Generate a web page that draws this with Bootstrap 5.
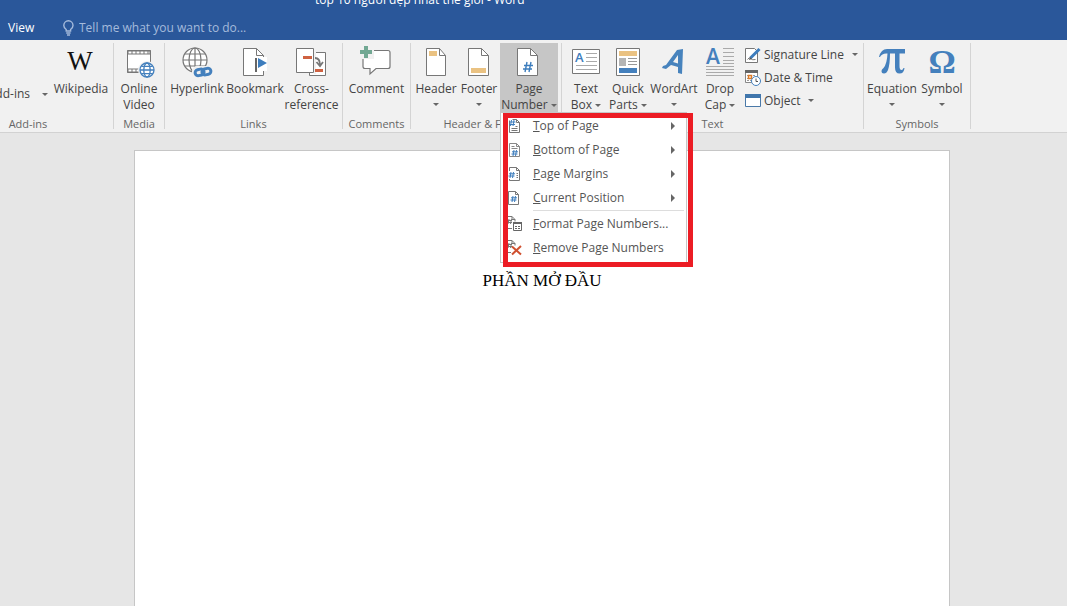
<!DOCTYPE html>
<html lang="en">
<head>
<meta charset="utf-8">
<meta name="viewport" content="width=device-width, initial-scale=1">
<title>Word</title>
<link href="https://cdn.jsdelivr.net/npm/bootstrap@5.3.0/dist/css/bootstrap.min.css" rel="stylesheet">
<style>
  body { font: 12px/16px "Open Sans", "Noto Sans", sans-serif; color: #444; background: #e6e6e6; }
  button { font: inherit; color: inherit; background: none; border: 0; padding: 0; }
  svg { display: block; flex: none; overflow: visible; }
  .title-bar { background: #2a579a; color: #fff; height: 40px; }
  .doc-title { height: 16px; margin-top: -8px; padding-left: 315px; }
  .tab-row { height: 24px; margin-top: 8px; padding-left: 8px; }
  .tab-row a { color: #fff; width: 54px; }
  .tell-me { background: none; border: 0; color: #fff; width: 220px; padding: 0; outline: 0; }
  .tell-me::placeholder { color: #a5bbdc; opacity: 1; }
  .ribbon { background: #f1f1f1; border-bottom: 1px solid #d2d2d2; height: 93px; padding-top: 3px; }
  .group { padding: 0 3px; border-right: 1px solid #d4d4d4; height: 86px; flex: none; }
  .group-addins { width: 171px; margin-left: -57px; }
  .group-name { color: #666; font-size: 11px; line-height: 14px; text-align: center; white-space: nowrap; }
  .tools { height: 74px; }
  .tool { display: flex; flex-direction: column; align-items: center; height: 69px; padding-top: 4px; white-space: nowrap; }
  .tool svg.pic { margin-bottom: 4px; }
  .tool.on { background: #c6c6c6; }
  .w-xs { width: 42px; } .w-s { width: 44px; } .w-m { width: 50px; } .w-l { width: 58px; } .w-c { width: 61px; } .w-r { width: 55px; }
  .caret { display: inline-block; border: 3px solid transparent; border-top-color: #666; border-bottom: 0; vertical-align: 2px; }
  .caret-row { line-height: 14px; }
  .side-tools { width: 119px; padding-left: 4px; }
  .side-tools button { height: 23px; white-space: nowrap; }
  .menu { position: absolute; top: 69px; left: 0; width: 187px; z-index: 5; background: #fff; border: 1px solid #c6c6c6; padding: 1px 0 2px; }
  .menu button { height: 24px; width: 100%; padding-left: 7px; color: #555; white-space: nowrap; text-align: left; }
  .menu svg { margin-right: 9px; }
  .menu .arrow { border: 4px solid transparent; border-left-color: #666; border-right: 0; margin: 0 11px 0 auto; }
  .menu hr { margin: 0 2px 1px 32px; opacity: 1; color: #ddd; }
  .highlight { position: absolute; inset: 0 -7px -5px 2px; border: 5px solid #ec1c24; pointer-events: none; }
  .sheet { background: #fff; border: 1px solid #c6c6c6; border-bottom: 0; margin: 17px 117px 0 134px; min-height: calc(100vh - 150px); padding-top: 120px; }
  .sheet h1 { font: 17px/20px "Liberation Serif", serif; color: #000; text-align: center; margin: 0; }
  .glyph-serif { font-family: "Liberation Serif", serif; }
</style>
</head>
<body class="overflow-hidden">
<header class="title-bar d-flex flex-column">
  <div class="doc-title">top 10 người đẹp nhất thế giới - Word</div>
  <nav class="tab-row d-flex align-items-center">
    <a href="#" class="text-decoration-none">View</a>
    <label for="tell" class="me-1" aria-label="Tell me"><svg width="13" height="16" viewBox="0 0 13 16" fill="none" stroke="#a5bbdc" stroke-width="1.4"><path d="M4.2 11V9.500C2.700 8.300 1.800 7 1.800 5.400a4.600 4.600 0 0 1 9.200 0c0 1.600-.9 2.900-2.400 4.100V11zM4.200 13h4.400M5 15h3"/></svg></label>
    <input id="tell" class="tell-me" type="text" placeholder="Tell me what you want to do...">
  </nav>
</header>

<div class="ribbon d-flex">
  <section class="group group-addins">
    <div class="tools d-flex justify-content-end">
      <button class="d-flex align-items-center pt-4 mt-1"><span class="me-2">My Add-ins</span><span class="caret ms-1 me-1"></span></button>
      <button class="tool w-l"><svg class="pic" width="30" height="30" viewBox="0 0 30 30"><text x="14" y="23" font-size="27" text-anchor="middle" class="glyph-serif" fill="#111">W</text></svg>Wikipedia</button>
    </div>
    <div class="group-name">Add-ins</div>
  </section>

  <section class="group">
    <div class="tools d-flex">
      <button class="tool w-s"><svg class="pic" width="30" height="30" viewBox="0 0 30 30"><path d="M3.500 3.500h23v22h-23z" fill="#fff" stroke="#777"/><path d="M3 5.500h24M3 23.500h12" stroke="#777" stroke-width="4"/><path d="M4.500 5.500h21M4.500 23.500h10" stroke="#fff" stroke-width="2" stroke-dasharray="3 1"/><circle cx="23" cy="23" r="9" fill="#f1f1f1"/><g fill="none" stroke="#4480bd" stroke-width="1.300"><circle cx="23" cy="23" r="7" fill="#fff"/><ellipse cx="23" cy="23" rx="3.200" ry="7"/><path d="M16 23h14M17.500 19.300h11M17.500 26.700h11"/></g></svg>Online<br>Video</button>
    </div>
    <div class="group-name">Media</div>
  </section>

  <section class="group">
    <div class="tools d-flex">
      <button class="tool w-l"><svg class="pic" width="32" height="30" viewBox="0 0 32 30" fill="none"><g stroke="#777" stroke-width="1.200"><circle cx="14" cy="13" r="12" fill="#fff"/><ellipse cx="14" cy="13" rx="6" ry="12"/><path d="M14 1v24M2 13h24M4 7h20M4 19h20"/></g><rect x="11" y="19" width="21" height="12" rx="5" fill="#f1f1f1"/><g stroke="#4480bd" stroke-width="3"><rect x="14" y="22.500" width="9" height="6" rx="3" transform="rotate(-12 18 25)"/><rect x="21" y="21.500" width="9" height="6" rx="3" transform="rotate(-12 26 25)"/></g></svg>Hyperlink</button>
      <button class="tool w-l"><svg class="pic" width="30" height="30" viewBox="0 0 30 30"><path d="M3.500 1.500h13l7 7v20h-20z" fill="#fff" stroke="#777"/><path d="M16.500 1.500v7h7" fill="none" stroke="#777"/><path d="M14 10h13v14H14z" fill="#fff"/><path d="M16 11v14" stroke="#666" stroke-width="2"/><path d="M18 11l9 5-9 5z" fill="#3d7dbd"/></svg>Bookmark</button>
      <button class="tool w-r"><svg class="pic" width="30" height="30" viewBox="0 0 30 30"><path d="M12.500 5.500h16v23h-16z" fill="#fff" stroke="#777"/><path d="M-.500 1.500h17v24h-17z" fill="#fff" stroke="#777"/><path d="M18 4v23" stroke="#f1f1f1" stroke-width="2"/><path d="M6 9h9v3H6zM18 22h8v3h-8z" fill="#cf6242"/><path d="M18 11c4 0 5 3 5 7M19.500 15l3.500 4 3-4" fill="none" stroke="#777" stroke-width="1.800"/></svg>Cross-<br>reference</button>
    </div>
    <div class="group-name">Links</div>
  </section>

  <section class="group">
    <div class="tools d-flex">
      <button class="tool w-c"><svg class="pic" width="32" height="30" viewBox="0 0 32 30"><path d="M4 3.500h23q2 0 2 2v14q0 2-2 2H15l-6 5.500V21.500H4q-2 0-2-2V4z" fill="#fff" stroke="#777" stroke-width="1.200"/><path d="M-1-1h14v13H-1z" fill="#f1f1f1"/><path d="M-1 5h12M5-1v12" stroke="#72a893" stroke-width="4"/></svg>Comment</button>
    </div>
    <div class="group-name">Comments</div>
  </section>

  <section class="group">
    <div class="tools d-flex">
      <button class="tool w-s"><svg class="pic" width="22" height="30" viewBox="0 0 22 30"><path d="M1.500 1.500h13l6 7v20h-19z" fill="#fff" stroke="#777"/><path d="M14.500 1.500v7h6" fill="none" stroke="#777"/><path d="M4 4h8v5H4z" fill="#eac282"/></svg>Header<span class="caret-row"><i class="caret"></i></span></button>
      <button class="tool w-xs"><svg class="pic" width="22" height="30" viewBox="0 0 22 30"><path d="M.500 1.500h13l7 7v20H.500z" fill="#fff" stroke="#777"/><path d="M13.500 1.500v7h7" fill="none" stroke="#777"/><path d="M3 21h15v5H3z" fill="#eac282"/></svg>Footer<span class="caret-row"><i class="caret"></i></span></button>
      <div class="position-relative">
        <button class="tool w-l on"><svg class="pic" width="22" height="30" viewBox="0 0 22 30"><path d="M-.500 1.500h13l7 7v20h-20z" fill="#fff" stroke="#777"/><path d="M12.500 1.500v7h7" fill="none" stroke="#777"/><path d="M9 15l-2 10M13 15l-2 10M6 18.500h9M5 22h9" stroke="#3d7dbd" stroke-width="1.400"/></svg>Page<span>Number <i class="caret"></i></span></button>
        <div class="menu">
          <button class="d-flex align-items-center"><svg width="16" height="16" viewBox="0 0 16 16" fill="none"><path d="M1.500 2.500v12h10v-10l-3-3h-4M8.500 1.500v3h3M3.500 10.500h6M3.500 12.500h6M7.500 8.500h2" stroke="#777"/><path d="M3.500 2l-1 6M6 2l-1 6M1.500 4h6M1 6.500h6" stroke="#3d7dbd"/></svg><span><u>T</u>op of Page</span><i class="arrow"></i></button>
          <button class="d-flex align-items-center"><svg width="16" height="16" viewBox="0 0 16 16" fill="none"><path d="M1.500 1.500h7l3 3v10h-10zM8.500 1.500v3h3M3.500 4.500h3M3.500 6.500h6" stroke="#888"/><path d="M6 8l-1 6M8.500 8l-1 6M4 9.800h6M3.500 12h6" stroke="#3d7dbd"/></svg><span><u>B</u>ottom of Page</span><i class="arrow"></i></button>
          <button class="d-flex align-items-center"><svg width="16" height="16" viewBox="0 0 16 16" fill="none"><path d="M1.500 5V1.500h7l3 3v10h-10V13M8.500 1.500v3h3M8.500 7.500h1.500M8.500 9.500h1.500M8.500 11.500h1.500" stroke="#777"/><path d="M3 6l-1 6M5.500 6l-1 6M1 7.800h6M.500 10h6" stroke="#3d7dbd"/></svg><span><u>P</u>age Margins</span><i class="arrow"></i></button>
          <button class="d-flex align-items-center"><svg width="16" height="16" viewBox="0 0 16 16" fill="none"><path d="M.500 1.500h7l3 3v10H.500zM7.500 1.500v3h3" stroke="#777"/><path d="M5 6l-1 6M7.500 6l-1 6M3 7.800h6M2.500 10h6" stroke="#3d7dbd"/></svg><span><u>C</u>urrent Position</span><i class="arrow"></i></button>
          <hr>
          <button class="d-flex align-items-center"><svg width="16" height="16" viewBox="0 0 16 16" fill="none"><path d="M0 .500h4l3 3v2M4 .500v3h3M0 12.500h4M1 3l-1 5M3.500 3l-1 5M0 4.500h4M0 6.500h4" stroke="#777"/><path d="M5.500 6.500h8v8h-8z" fill="#fff" stroke="#666"/><path d="M5 7h9" stroke="#666" stroke-width="2"/><path d="M7 10.500h5M7 12.500h5" stroke="#666" stroke-dasharray="2 1"/></svg><span><u>F</u>ormat Page Numbers...</span></button>
          <button class="d-flex align-items-center"><svg width="16" height="16" viewBox="0 0 16 16" fill="none"><path d="M0 .500h4l3 3v2M4 .500v3h3M0 12.500h3M1 3l-1 5M3.500 3l-1 5M0 4.500h4M0 6.500h4" stroke="#777"/><path d="M4 6.500l9 8M13 6L4 14.500" stroke="#d0502f" stroke-width="2"/></svg><span><u>R</u>emove Page Numbers</span></button>
          <div class="highlight"></div>
        </div>
      </div>
    </div>
    <div class="group-name">Header &amp; Footer</div>
  </section>

  <section class="group">
    <div class="tools d-flex">
      <button class="tool w-xs"><svg class="pic" width="28" height="30" viewBox="0 0 28 30"><path d="M.500 2.500h27v24H.500z" fill="#fff" stroke="#777"/><path d="M14 6.500h11M14 10.500h11M14 14.500h11M4 18.500h21M4 22.500h21" stroke="#aaa"/><text x="3" y="15" font-size="13" font-weight="600" fill="#3d7dbd">A</text></svg>Text<span>Box <i class="caret"></i></span></button>
      <button class="tool w-xs"><svg class="pic" width="24" height="30" viewBox="0 0 24 30"><path d="M.500 1.500h23v27H.500z" fill="#fff" stroke="#777"/><path d="M3 4h18v5H3z" fill="#eac282"/><path d="M3 11h7v8H3z" fill="#b5b5b5"/><path d="M12 11.500h9M12 14.500h9M12 17.500h9" stroke="#999"/><path d="M3 21h18v5H3z" fill="#4480bd"/></svg>Quick<span>Parts <i class="caret"></i></span></button>
      <button class="tool w-m"><svg class="pic" width="26" height="30" viewBox="0 0 26 30"><path fill="#4783bd" fill-rule="evenodd" d="M16 3l6-1-1 25-4-1v-6l-7-2-5 4-4-1 1-2 3-1zM17 8l-5 7 5 1.500z"/></svg>WordArt<span class="caret-row"><i class="caret"></i></span></button>
      <button class="tool w-xs"><svg class="pic" width="28" height="30" viewBox="0 0 28 30"><text x="0" y="17" font-size="21" font-weight="600" fill="#4480bd">A</text><path d="M17 1.500h11M17 5.500h11M17 9.500h11M17 13.500h11M17 16.500h11M0 19.500h28M0 22.500h28M0 25.500h28M0 28.500h28" stroke="#aaa"/></svg>Drop<span>Cap <i class="caret"></i></span></button>
      <div class="side-tools d-flex flex-column">
        <button class="d-flex align-items-center"><svg class="me-1" width="15" height="16" viewBox="0 0 15 16"><path d="M.500 1.500h9l3 3v11H.500z" fill="#fff" stroke="#777"/><path d="M2.500 12.500q2-3 3-1 2 2 5 1" fill="none" stroke="#777"/><path d="M5.500 11l9-9" stroke="#3d7dbd" stroke-width="3"/><path d="M4 13l1-3 2 2z" fill="#555"/></svg>Signature Line<i class="caret ms-2"></i></button>
        <button class="d-flex align-items-center"><svg class="me-1" width="15" height="16" viewBox="0 0 15 16"><path d="M.500 1.500h12v11H.500z" fill="#fff" stroke="#888"/><path d="M0 1.500h13" stroke="#666" stroke-width="3"/><path d="M2 5.500h9M2 8.500h9M2 10.500h5" stroke="#999" stroke-dasharray="2 1"/><path d="M3.500 5.500h3v3h-3z" fill="#fff" stroke="#dd7a25" stroke-width="1.500"/><circle cx="11" cy="11" r="4.500" fill="#fff" stroke="#4480bd"/><path d="M11 8.500v3h2" fill="none" stroke="#555"/></svg>Date &amp; Time</button>
        <button class="d-flex align-items-center"><svg class="me-1" width="15" height="16" viewBox="0 0 15 16"><path d="M.500 1.500h15v12H.500z" fill="#fff" stroke="#4a79a8"/><path d="M0 1h16v4H0z" fill="#4076ac"/></svg>Object<i class="caret ms-2"></i></button>
      </div>
    </div>
    <div class="group-name">Text</div>
  </section>

  <section class="group">
    <div class="tools d-flex">
      <button class="tool w-m"><svg class="pic" width="26" height="30" viewBox="0 0 26 30"><path fill="#4480bd" d="M0 10Q2 2 8 2H26v4.500H20.500V19q0 4 2 4 1.500 0 2-2h1q-.5 5.500-5 5.500-4.500 0-4.500-6V6.500H11Q11 17 9 23q-1.500 3.500-4 3.500-2.500 0-2.500-2.500 0-1.500 2-3Q8 17 8.500 6.500 3 6 1 10z"/></svg>Equation<span class="caret-row"><i class="caret"></i></span></button>
      <button class="tool w-m"><svg class="pic" width="28" height="30" viewBox="0 0 28 30"><text x="14" y="26" font-size="34" font-weight="700" text-anchor="middle" class="glyph-serif" fill="#4480bd">Ω</text></svg>Symbol<span class="caret-row"><i class="caret"></i></span></button>
    </div>
    <div class="group-name">Symbols</div>
  </section>
</div>

<main class="sheet"><h1>PHẦN MỞ ĐẦU</h1></main>
<script src="https://cdn.jsdelivr.net/npm/bootstrap@5.3.0/dist/js/bootstrap.bundle.min.js"></script>
</body>
</html>
